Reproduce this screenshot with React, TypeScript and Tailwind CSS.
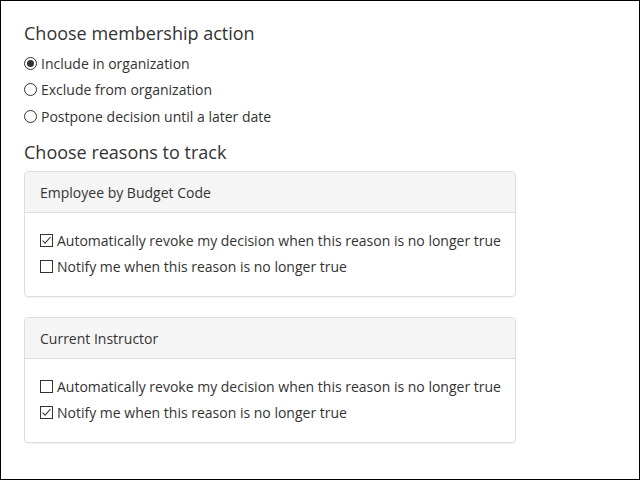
import React from "react";

function Radio({ checked, label }: { checked?: boolean; label: string }) {
    return (
        <div className="flex h-[26.5px] items-center">
            <span className="mr-[4px] flex h-[13px] w-[13px] items-center justify-center rounded-full border border-[#333]">
                {checked && <span className="h-[7px] w-[7px] rounded-full bg-[#333]" />}
            </span>
            <span>{label}</span>
        </div>
    );
}

function Check({ checked, label }: { checked?: boolean; label: string }) {
    return (
        <div className="flex h-[26px] items-center whitespace-nowrap">
            <svg width="13" height="13" viewBox="0 0 13 13" className="mr-[4px] shrink-0">
                <rect x="0.5" y="0.5" width="12" height="12" fill="#fff" stroke="#333" />
                {checked && (
                    <path d="M2.5 6.5 L5 9.2 L10.5 3" fill="none" stroke="#333" strokeWidth="1.1" />
                )}
            </svg>
            <span>{label}</span>
        </div>
    );
}

function Panel({
    title,
    revoke,
    notify,
}: {
    title: string;
    revoke?: boolean;
    notify?: boolean;
}) {
    return (
        <div className="w-[492px] rounded-[4px] border border-[#ddd] shadow-[0_1px_1px_rgba(0,0,0,0.05)]">
            <div className="rounded-t-[4px] border-b border-[#ddd] bg-[#f5f5f5] px-[15px] pt-[11px] pb-[9px] leading-[20px]">
                {title}
            </div>
            <div className="px-[15px] pt-[15px] pb-[16px]">
                <Check checked={revoke} label="Automatically revoke my decision when this reason is no longer true" />
                <Check checked={notify} label="Notify me when this reason is no longer true" />
            </div>
        </div>
    );
}

export default function App() {
    return (
        <div className="h-[480px] w-[640px] overflow-hidden border border-black bg-white font-['Open_Sans',sans-serif] text-[14px] text-[#333]">
            <div className="flex flex-col pl-[23px] pt-[22px]">
                <h4 className="text-[18px] leading-[20px]">Choose membership action</h4>
                <div className="mt-[7px] flex flex-col">
                    <Radio checked label="Include in organization" />
                    <Radio label="Exclude from organization" />
                    <Radio label="Postpone decision until a later date" />
                </div>
                <h4 className="mt-[12px] text-[18px] leading-[20px]">Choose reasons to track</h4>
                <div className="mt-[9px] flex flex-col gap-[20px]">
                    <Panel title="Employee by Budget Code" revoke />
                    <Panel title="Current Instructor" notify />
                </div>
            </div>
        </div>
    );
}
